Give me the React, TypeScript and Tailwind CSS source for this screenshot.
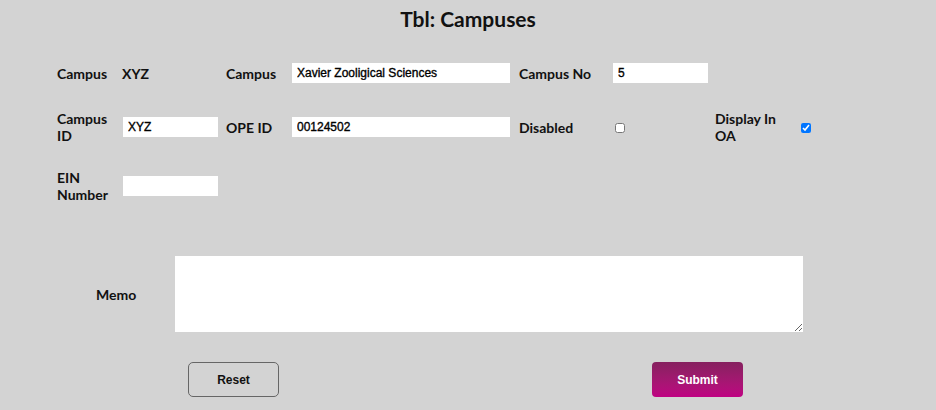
import React from "react";

const lbl = "text-[14px] font-bold leading-[17px] text-[#111]";
const inp = "h-5 bg-white px-[5px] text-[12px] font-normal [-webkit-text-stroke:0.35px_black] text-black outline-none border-0 [font-family:'Liberation_Sans',Arial,sans-serif]";

export default function App() {
  return (
    <div className="w-[936px] h-[410px] bg-[#d3d3d3] [font-family:Lato,'Noto_Sans',sans-serif] overflow-hidden">
      <h1 className="pt-[7px] text-center text-[21px] font-bold leading-[24px] text-[#111]">Tbl: Campuses</h1>
      <div className="mt-[32px] ml-[57px] grid grid-cols-[65px_104px_66px_227px_94px_102px_86px_30px] items-center">
        {/* row 1 */}
        <div className={lbl}>Campus</div>
        <div className={lbl}>XYZ</div>
        <div className={lbl}>Campus</div>
        <input className={`${inp} w-[218px]`} defaultValue="Xavier Zooligical Sciences" />
        <div className={lbl}>Campus No</div>
        <input className={`${inp} w-[95px]`} defaultValue="5" />
        <div />
        <div />
        {/* spacer */}
        <div className="col-span-8 h-[27px]" />
        {/* row 2 */}
        <div className={lbl}>Campus<br />ID</div>
        <input className={`${inp} w-[95px] ml-px`} defaultValue="XYZ" />
        <div className={lbl}>OPE ID</div>
        <input className={`${inp} w-[218px]`} defaultValue="00124502" />
        <div className={lbl}>Disabled</div>
        <div><input type="checkbox" className="ml-[2px] mt-[2px] w-[10px] h-[10px] block" /></div>
        <div className={lbl}>Display In<br />OA</div>
        <div><input type="checkbox" defaultChecked className="mt-[2px] w-[10px] h-[10px] block" /></div>
        <div className="col-span-8 h-[25px]" />
        {/* row 3 */}
        <div className={lbl}>EIN<br />Number</div>
        <input className={`${inp} w-[95px] ml-px`} />
        <div className="col-span-6" />
      </div>
      <div className="mt-[53px] flex items-center">
        <div className={`${lbl} w-[175px]`}><span className="ml-[96px]">Memo</span></div>
        <textarea className="w-[628px] h-[76px] bg-white border-0 outline-none" />
      </div>
      <div className="mt-[30px] flex">
        <button className="ml-[188px] w-[91px] h-[35px] rounded-[5px] border border-[#666] bg-transparent text-[12px] font-bold text-[#111] [font-family:'Liberation_Sans',Arial,sans-serif]">Reset</button>
        <button className="ml-[373px] w-[91px] h-[35px] rounded-[4px] bg-gradient-to-b from-[#86205f] to-[#bf0082] text-[12px] font-bold text-white [font-family:'Liberation_Sans',Arial,sans-serif]">Submit</button>
      </div>
    </div>
  );
}
